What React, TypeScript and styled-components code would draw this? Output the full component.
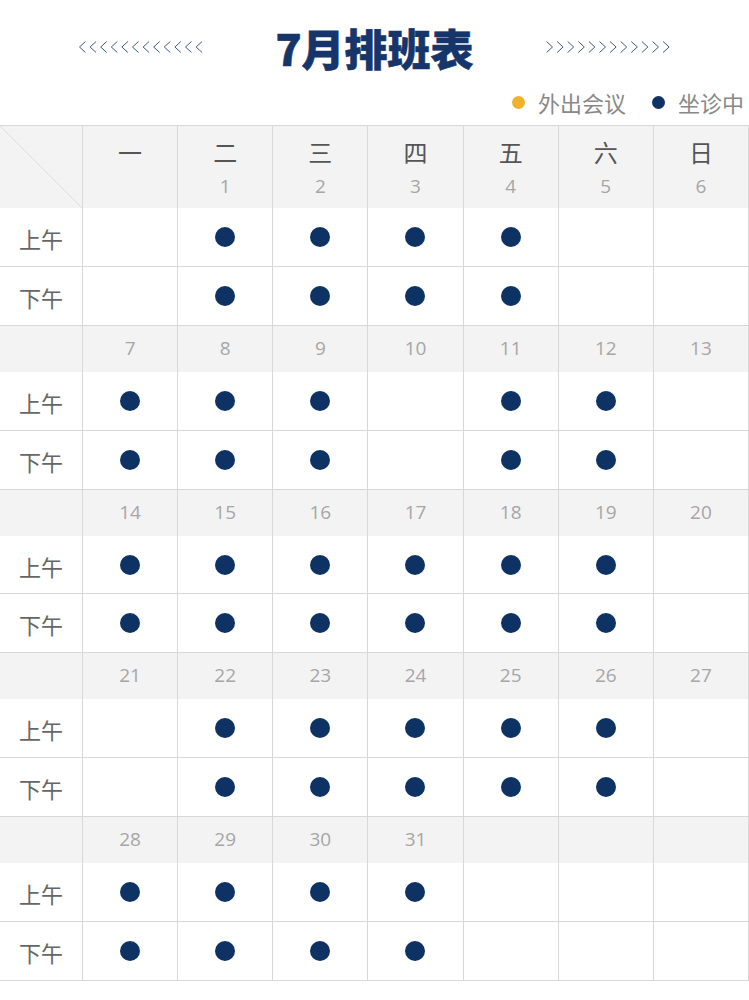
import { createGlobalStyle, styled } from "styled-components";

const GlobalStyle = createGlobalStyle`
  html, body {
    margin: 0;
    padding: 0;
    background: #fff;
  }
  body {
    font-family: "Open Sans", "Noto Sans CJK SC", sans-serif;
  }
`;

const NAVY = "#0e3263";
const LINE = "#d8d8d8";

const SPage = styled.div`
  width: 749px;
  background: #fff;
`;

const STitleBar = styled.div`
  display: flex;
  align-items: center;
  justify-content: center;
  gap: 71px;
  height: 78px;
  padding-top: 8px;
`;

const STitle = styled.h1`
  margin: 0;
  font-family: "Noto Sans CJK SC", sans-serif;
  font-size: 43px;
  font-weight: 900;
  color: #16356a;
  line-height: 1;
  -webkit-text-stroke: 0.6px #16356a;
`;

const SLegend = styled.div`
  display: flex;
  justify-content: flex-end;
  align-items: center;
  gap: 26px;
  height: 32px;
  padding: 0 5px 7px 0;
`;

const SLegendItem = styled.div`
  display: flex;
  align-items: center;
  gap: 13px;
  font-family: "Noto Sans CJK SC", sans-serif;
  font-size: 22px;
  color: #888;
`;

const SDot = styled.span<{ $color: string; $size: number }>`
  display: inline-block;
  width: ${(p) => p.$size}px;
  height: ${(p) => p.$size}px;
  border-radius: 50%;
  background: ${(p) => p.$color};
`;

const STable = styled.div`
  display: grid;
  grid-template-columns: 83px repeat(7, 1fr);
  border-top: 1px solid ${LINE};
`;

const SCell = styled.div<{ $gray?: boolean; $h: number; $line?: boolean }>`
  box-sizing: border-box;
  height: ${(p) => p.$h}px;
  background: ${(p) => (p.$gray ? "#f3f3f3" : "#fff")};
  border-right: 1px solid ${LINE};
  border-bottom: ${(p) => (p.$line ? `1px solid ${LINE}` : "none")};
  display: flex;
  flex-direction: column;
  align-items: center;
  justify-content: center;
`;

const SHeadCell = styled(SCell)`
  justify-content: flex-start;
  padding-top: 11px;
`;

const SCorner = styled(SCell)`
  background: linear-gradient(
      to top right,
      transparent calc(50% - 0.6px),
      #dcdcdc 50%,
      transparent calc(50% + 0.6px)
    ),
    #f3f3f3;
`;

const SWeekday = styled.div`
  font-family: "Noto Sans CJK SC", sans-serif;
  font-size: 24px;
  color: #555;
  line-height: 30px;
`;

const SDate = styled.div<{ $head?: boolean }>`
  font-size: 19px;
  color: #a6a6a6;
  line-height: 24px;
  margin-top: ${(p) => (p.$head ? "7px" : "-2px")};
`;

const SSlotLabel = styled.div`
  font-family: "Noto Sans CJK SC", sans-serif;
  font-size: 22px;
  color: #666;
  margin-top: 2px;
`;

const Chevrons = ({ dir }: { dir: "left" | "right" }) => {
  const items = Array.from({ length: 12 }, (_, i) => i * 10.6);
  return (
    <svg width="126" height="14" viewBox="0 0 126 14">
      {items.map((x) => (
        <polyline
          key={x}
          points={
            dir === "left"
              ? `${x + 7.5},1.5 ${x + 1.5},7 ${x + 7.5},12.5`
              : `${x + 1.5},1.5 ${x + 7.5},7 ${x + 1.5},12.5`
          }
          fill="none"
          stroke="#2a4575"
          strokeWidth="0.9"
        />
      ))}
    </svg>
  );
};

const WEEKDAYS = ["一", "二", "三", "四", "五", "六", "日"];

// each week: dates per weekday (null = outside month), and which weekdays are on duty
const WEEKS: { dates: (number | null)[]; duty: number[] }[] = [
  { dates: [null, 1, 2, 3, 4, 5, 6], duty: [1, 2, 3, 4] },
  { dates: [7, 8, 9, 10, 11, 12, 13], duty: [0, 1, 2, 4, 5] },
  { dates: [14, 15, 16, 17, 18, 19, 20], duty: [0, 1, 2, 3, 4, 5] },
  { dates: [21, 22, 23, 24, 25, 26, 27], duty: [1, 2, 3, 4, 5] },
  { dates: [28, 29, 30, 31, null, null, null], duty: [0, 1, 2, 3] },
];

const SLOTS = ["上午", "下午"];
const SLOT_H = 58.9;

const SlotRows = ({ duty }: { duty: number[] }) => (
  <>
    {SLOTS.map((slot) => (
      <>
        <SCell key={slot} $h={SLOT_H} $line>
          <SSlotLabel>{slot}</SSlotLabel>
        </SCell>
        {WEEKDAYS.map((_, d) => (
          <SCell key={slot + d} $h={SLOT_H} $line>
            {duty.includes(d) && <SDot $color={NAVY} $size={20} />}
          </SCell>
        ))}
      </>
    ))}
  </>
);

const App = () => {
  return (
    <SPage>
      <GlobalStyle />
      <STitleBar>
        <Chevrons dir="left" />
        <STitle>7月排班表</STitle>
        <Chevrons dir="right" />
      </STitleBar>
      <SLegend>
        <SLegendItem>
          <SDot $color="#f0b22c" $size={13} />
          外出会议
        </SLegendItem>
        <SLegendItem>
          <SDot $color={NAVY} $size={13} />
          坐诊中
        </SLegendItem>
      </SLegend>
      <STable>
        {WEEKS.map((week, w) => (
          <>
            {w === 0 ? (
              <>
                <SCorner $h={82} $gray />
                {WEEKDAYS.map((name, d) => (
                  <SHeadCell key={name} $h={82} $gray>
                    <SWeekday>{name}</SWeekday>
                    {week.dates[d] !== null && (
                      <SDate $head>{week.dates[d]}</SDate>
                    )}
                  </SHeadCell>
                ))}
              </>
            ) : (
              <>
                <SCell $h={46} $gray />
                {week.dates.map((date, d) => (
                  <SCell key={"d" + d} $h={46} $gray>
                    {date !== null && <SDate>{date}</SDate>}
                  </SCell>
                ))}
              </>
            )}
            <SlotRows duty={week.duty} />
          </>
        ))}
      </STable>
    </SPage>
  );
};

export default App;
